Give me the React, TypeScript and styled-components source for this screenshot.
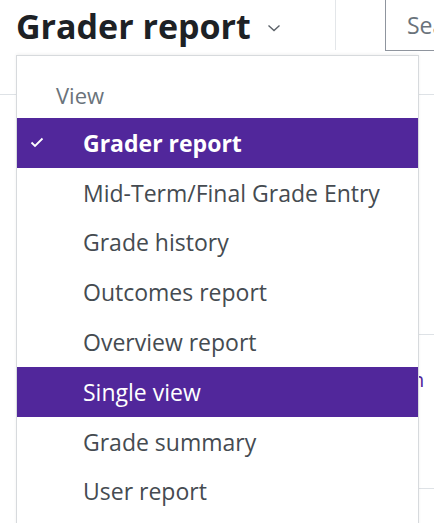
import React from 'react';
import styled, { createGlobalStyle } from 'styled-components';

const GlobalStyle = createGlobalStyle`
  html, body {
    margin: 0;
    padding: 0;
    background: #fff;
  }
  body {
    font-family: "Open Sans", "Noto Sans", sans-serif;
    color: #1d2125;
  }
`;

const Page = styled.div`
  position: relative;
  width: 434px;
  height: 523px;
  overflow: hidden;
  background: #fff;
`;

const HeaderBar = styled.header`
  display: grid;
  grid-template-columns: 319px 50px 1fr;
  height: 52px;
  padding-left: 16px;
`;

const TitleGroup = styled.div`
  display: flex;
  align-items: center;
  gap: 16px;
`;

const Title = styled.h1`
  margin: 0;
  font-size: 34px;
  font-weight: 700;
  color: #1d2125;
  line-height: 1;
`;

const Chevron = styled.svg`
  width: 14px;
  height: 8px;
  margin-top: 4px;
`;

const Divider = styled.div`
  border-left: 1px solid #e3e6e9;
  margin-bottom: 2px;
`;

const SearchBox = styled.div`
  border: 1px solid #8f959e;
  border-top: none;
  border-right: none;
  height: 50px;
  display: flex;
  align-items: center;
  padding-left: 21px;
  font-size: 23px;
  color: #6a737b;
  white-space: nowrap;
  overflow: hidden;
`;

const Content = styled.div`
  margin-top: 42px;
  border-top: 1px solid #dee2e6;
  display: grid;
  grid-template-columns: 1fr 15px;
`;

const SideColumn = styled.div`
  grid-column: 2;
  display: flex;
  flex-direction: column;
`;

const SideCell = styled.div<{ $height: number }>`
  height: ${p => p.$height}px;
  border-bottom: 1px solid #dee2e6;
  overflow: hidden;
`;

const SideLink = styled.div`
  color: #51279b;
  font-size: 20px;
  line-height: 1;
  margin: 35px 0 0 -7px;
`;

const Menu = styled.nav`
  position: absolute;
  top: 55px;
  left: 16px;
  width: 401px;
  bottom: -40px;
  background: #fff;
  border: 1px solid #d7dadd;
  box-shadow: 0 -1px 3px rgba(0, 0, 0, 0.06);
  padding-top: 16px;
`;

const MenuHeader = styled.div`
  height: 46px;
  display: flex;
  align-items: center;
  padding-left: 39px;
  font-size: 22px;
  color: #6a737b;
`;

const MenuItem = styled.div<{ $active?: boolean; $bold?: boolean }>`
  position: relative;
  height: 49.8px;
  display: flex;
  align-items: center;
  padding-left: 66px;
  font-size: 23px;
  font-weight: ${p => (p.$bold ? 700 : 400)};
  color: ${p => (p.$active ? '#fff' : '#454b51')};
  background: ${p => (p.$active ? '#51279b' : 'transparent')};
  white-space: nowrap;
`;

const Check = styled.svg`
  position: absolute;
  left: 13px;
  top: 50%;
  width: 14px;
  height: 11px;
  margin-top: -6px;
`;

const items = [
  { label: 'Grader report', active: true, bold: true, checked: true },
  { label: 'Mid-Term/Final Grade Entry' },
  { label: 'Grade history' },
  { label: 'Outcomes report' },
  { label: 'Overview report' },
  { label: 'Single view', active: true },
  { label: 'Grade summary' },
  { label: 'User report' },
];

const App = () => {
  return (
    <Page>
      <GlobalStyle />
      <HeaderBar>
        <TitleGroup>
          <Title>Grader report</Title>
          <Chevron viewBox="0 0 14 8">
            <polyline points="1.5,1.5 7,6.5 12.5,1.5" fill="none" stroke="#5b6168" strokeWidth="1.4" />
          </Chevron>
        </TitleGroup>
        <Divider />
        <SearchBox>Search users</SearchBox>
      </HeaderBar>

      <Content>
        <SideColumn>
          <SideCell $height={239} />
          <SideCell $height={153}>
            <SideLink>n</SideLink>
          </SideCell>
          <SideCell $height={60} />
        </SideColumn>
      </Content>

      <Menu>
        <MenuHeader>View</MenuHeader>
        {items.map(item => (
          <MenuItem key={item.label} $active={item.active} $bold={item.bold}>
            {item.checked && (
              <Check viewBox="0 0 14 11">
                <polyline points="1.5,5.5 5,9 12.5,1.5" fill="none" stroke="#fff" strokeWidth="1.8" />
              </Check>
            )}
            {item.label}
          </MenuItem>
        ))}
      </Menu>
    </Page>
  );
};

export default App;
